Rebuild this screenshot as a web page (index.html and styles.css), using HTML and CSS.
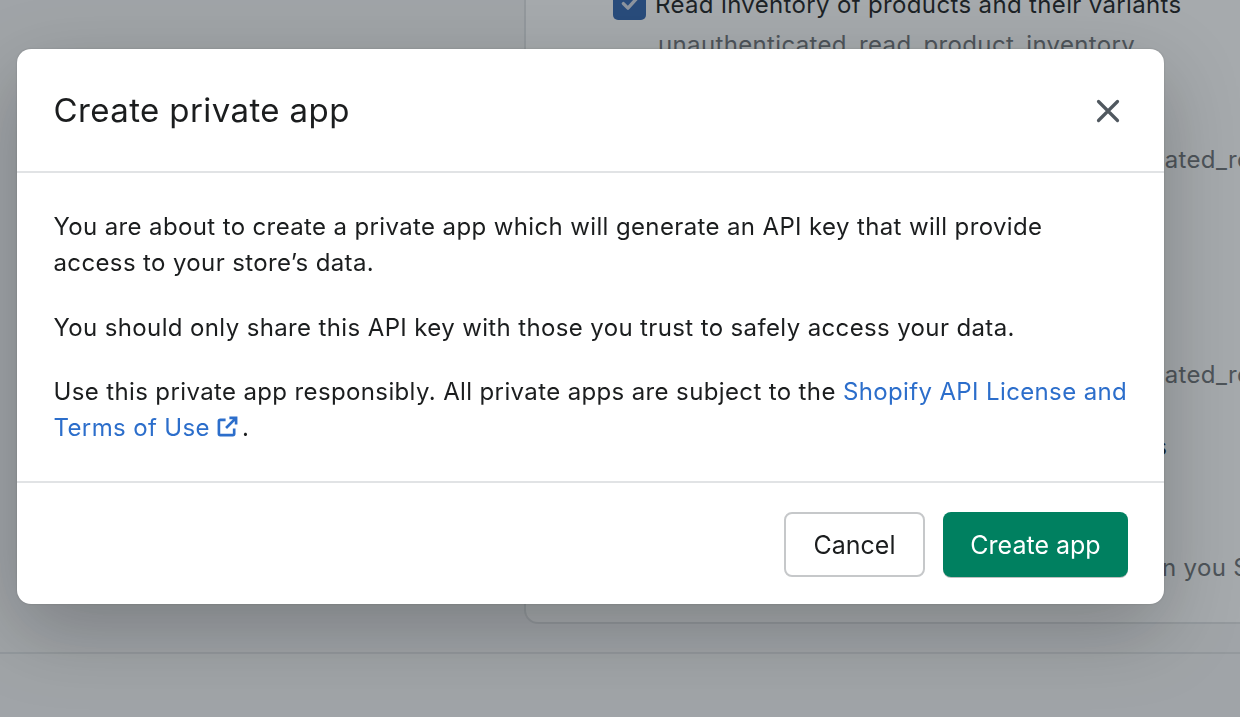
FILE: index.html
```html
<!DOCTYPE html>
<html lang="en">
<head>
    <meta charset="UTF-8">
    <meta name="viewport" content="width=device-width, initial-scale=1.0">
    <title>Create private app</title>
    <link rel="stylesheet" href="styles.css">
</head>
<body>
    <div class="layout">
        <div class="card">
            <div class="scope-row">
                <span class="checkbox">
                    <svg viewBox="0 0 20 20" width="24" height="24"><path d="M4.5 10.5l3.800 3.800 7.200-8" fill="none" stroke="#d5dce8" stroke-width="2.800" stroke-linecap="round" stroke-linejoin="round"/></svg>
                </span>
                <span class="scope-label">Read inventory of products and their variants</span>
            </div>
            <div class="scope-code">unauthenticated_read_product_inventory</div>
            <div class="scope-code far-one">unauthenticated_read_product_tags</div>
            <div class="scope-code far-two">unauthenticated_read_checkouts</div>
            <div class="scope-label far-three">Read and modify customers and their orders</div>
            <div class="scope-code far-four">These scopes are only available when you Sell</div>
        </div>
    </div>

    <div class="backdrop">
        <div class="modal">
            <div class="modal-header">
                <h2>Create private app</h2>
                <button class="close-button" aria-label="Close">
                    <svg viewBox="0 0 24 24" width="24" height="24"><path d="M2.500 2.500l19 19M21.500 2.500l-19 19" fill="none" stroke="#50585f" stroke-width="3.200" stroke-linecap="round"/></svg>
                </button>
            </div>
            <div class="modal-body">
                <p class="first">You are about to create a private app which will generate an API key that will provide access to your store’s data.</p>
                <p>You should only share this API key with those you trust to safely access your data.</p>
                <p class="last">Use this private app responsibly. All private apps are subject to the <a href="#">Shopify API License and Terms of Use <svg class="external" viewBox="0 0 22 22" width="21" height="21"><path d="M9 4H3.500A1.500 1.500 0 0 0 2 5.500V18.500A1.500 1.500 0 0 0 3.500 20H16.500A1.500 1.500 0 0 0 18 18.500V13M13 2h7v7M20 2L9.500 12.500" fill="none" stroke="#2c6ecb" stroke-width="2.800"/></svg></a>.</p>
            </div>
            <div class="modal-footer">
                <button class="btn">Cancel</button>
                <button class="btn primary">Create app</button>
            </div>
        </div>
    </div>
</body>
</html>
```
FILE: styles.css
```css
html, body {
    margin: 0;
    height: 100%;
}

body {
    font-family: Inter, "Noto Sans", sans-serif;
    background-color: #f6f6f7;
    color: #1b1d1e;
    overflow: hidden;
}

.layout {
    height: 652px;
    border-bottom: 2px solid #e1e3e5;
    padding-left: 524px;
    overflow: hidden;
}

.card {
    height: 643px;
    margin-top: -23px;
    margin-right: -20px;
    padding-left: 87px;
    background-color: #fff;
    border: 2px solid #e1e3e5;
    border-radius: 14px;
    font-size: 24px;
    line-height: 36px;
    letter-spacing: 0.35px;
    white-space: nowrap;
}

.scope-row {
    display: flex;
    align-items: center;
    gap: 9px;
    margin-top: 8px;
}

.checkbox {
    width: 33px;
    height: 33px;
    margin-top: -4px;
    background-color: #2f63ad;
    border-radius: 5px;
    display: flex;
    align-items: center;
    justify-content: center;
}

.scope-code {
    margin-left: 45px;
    margin-top: 4px;
    color: #6d7175;
}

.far-one {
    margin-left: 414px;
    margin-top: 79px;
}

.far-two {
    margin-left: 414px;
    margin-top: 179px;
}

.far-three {
    margin-left: 35px;
    margin-top: 36px;
}

.far-four {
    margin-left: 119px;
    margin-top: 85px;
}

.backdrop {
    position: fixed;
    inset: 0;
    background-color: rgba(33, 43, 50, 0.4);
    display: flex;
    align-items: flex-start;
    padding: 49px 76px 0 17px;
}

.modal {
    flex: 1;
    height: 555px;
    background-color: #fff;
    border-radius: 14px;
    box-shadow: 0 26px 80px rgba(0, 0, 0, 0.24), 0 0 2px rgba(0, 0, 0, 0.2);
    display: flex;
    flex-direction: column;
}

.modal-header {
    height: 122px;
    padding: 0 44px 0 36.500px;
    border-bottom: 2px solid #e1e3e5;
    display: flex;
    align-items: center;
    justify-content: space-between;
}

.modal-header h2 {
    margin: 0;
    font-size: 33px;
    font-weight: 400;
    letter-spacing: 0.4px;
}

.close-button {
    margin-top: 2px;
    padding: 0;
    border: none;
    background: none;
    display: flex;
}

.modal-body {
    flex: 1;
    padding: 36px 36px 0 36.500px;
    font-size: 24px;
    line-height: 36px;
    letter-spacing: 0.37px;
}

.modal-body p {
    margin: 0 0 30px;
}

.modal-body p.first {
    margin-bottom: 29px;
}

.modal-body p.last {
    margin-top: -2px;
}

.modal-body a {
    color: #2c6ecb;
    text-decoration: none;
}

.external {
    vertical-align: -1px;
    margin-right: 4px;
}

.modal-footer {
    height: 123px;
    padding: 29px 36px 0;
    border-top: 2px solid #e1e3e5;
    box-sizing: border-box;
    display: flex;
    justify-content: flex-end;
    gap: 18px;
}

.btn {
    height: 65px;
    width: 141px;
    font-family: inherit;
    font-size: 25px;
    color: #1b1d1e;
    background-color: #fff;
    border: 2px solid #c6c8ca;
    border-radius: 8px;
}

.btn.primary {
    width: 185px;
    color: #fff;
    background-color: #008060;
    border: none;
    box-shadow: 0 1px 0 rgba(0, 0, 0, 0.25);
}
```
